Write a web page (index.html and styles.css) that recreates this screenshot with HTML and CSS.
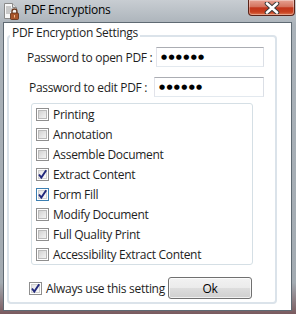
FILE: index.html
```html
<!DOCTYPE html>
<html lang="en">
<head>
  <meta charset="UTF-8">
  <title>PDF Encryptions</title>
  <link rel="stylesheet" href="styles.css">
</head>
<body>
  <div class="window">
    <div class="titlebar">
      <svg class="app-icon" width="16" height="18" viewBox="0 0 16 18">
        <path d="M1.5 1.5h8l4 4v11h-12z" fill="#f7f7f7" stroke="#8a8a8a"/>
        <path d="M9.5 1.5v4h4" fill="#dedede" stroke="#8a8a8a"/>
        <path d="M3 5h5M3 7h7M3 9h6M3 11h4" stroke="#9c9c9c"/>
        <path d="M9 11v-1.5a2.5 2.5 0 0 1 5 0v1.5" fill="none" stroke="#6b3b22" stroke-width="1.3"/>
        <rect x="7.5" y="11" width="8" height="6.5" rx="1" fill="#a8552b" stroke="#5c2c14" stroke-width="0.8"/>
        <rect x="11" y="13" width="1" height="2.5" fill="#f0c090"/>
      </svg>
      <span class="title">PDF Encryptions</span>
      <div class="close">
        <svg width="16" height="12" viewBox="0 0 16 12">
          <path d="M3 1.5l10 9M13 1.5l-10 9" stroke="#3a3a3a" stroke-width="4.6" stroke-linecap="round"/>
          <path d="M3 1.5l10 9M13 1.5l-10 9" stroke="#ffffff" stroke-width="2.6" stroke-linecap="round"/>
        </svg>
      </div>
    </div>

    <div class="client">
      <div class="group">
        <span class="group-title">PDF Encryption Settings</span>

        <div class="pw-row pw-open">
          <span class="pw-label">Password to open PDF :</span>
          <div class="field"><span class="dots">●●●●●●</span></div>
        </div>
        <div class="pw-row pw-edit">
          <span class="pw-label">Password to edit PDF :</span>
          <div class="field"><span class="dots">●●●●●●</span></div>
        </div>

        <div class="perm-list">
          <div class="perm"><span class="cb"></span>Printing</div>
          <div class="perm"><span class="cb"></span>Annotation</div>
          <div class="perm"><span class="cb"></span>Assemble Document</div>
          <div class="perm"><span class="cb checked"></span>Extract Content</div>
          <div class="perm"><span class="cb checked hot"></span>Form Fill</div>
          <div class="perm"><span class="cb"></span>Modify Document</div>
          <div class="perm"><span class="cb"></span>Full Quality Print</div>
          <div class="perm"><span class="cb"></span>Accessibility Extract Content</div>
        </div>

        <div class="footer">
          <div class="perm"><span class="cb checked"></span>Always use this setting</div>
          <button class="ok">Ok</button>
        </div>
      </div>
    </div>
  </div>
</body>
</html>
```

FILE: styles.css
```css
body {
  margin: 0;
  font-family: 'Open Sans', 'Noto Sans', sans-serif;
  font-size: 12px;
  letter-spacing: -0.3px;
  color: #1e1e1e;
  white-space: nowrap;
}
.window {
  width: 296px;
  height: 314px;
  display: flex;
  flex-direction: column;
  background: linear-gradient(#c8cdd2, #aab2b9 8%, #a3abb2 90%, #7a5a5e);
  overflow: hidden;
}

/* caption */
.titlebar {
  height: 22px;
  display: flex;
  align-items: flex-start;
  flex-shrink: 0;
}
.app-icon { margin: 2px 0 0 3px; }
.title {
  margin: 2px 0 0 5px;
  line-height: 16px;
  color: #000;
}
.close {
  margin-left: auto;
  margin-right: 1px;
  width: 47px;
  height: 16px;
  box-sizing: border-box;
  border: 1px solid #5a2318;
  border-top: none;
  border-radius: 0 0 4px 4px;
  background: linear-gradient(#e6a193, #d4735e 45%, #c2351c 52%, #c8401f 80%, #de7a55);
  box-shadow: inset 0 0 0 1px rgba(255, 255, 255, 0.35);
  display: flex;
  justify-content: center;
  align-items: center;
}

/* client area */
.client {
  flex: 1;
  margin: 0 4px 3px 3px;
  border: 1px solid #5f6a73;
  background: #ffffff;
  padding: 12px 0 0 3px;
}
.group {
  position: relative;
  width: 270px;
  box-sizing: border-box;
  border: 2px solid #dbe3ea;
  border-radius: 4px;
  padding-bottom: 3px;
}
.group-title {
  position: absolute;
  left: 1px;
  top: -12px;
  padding: 0 2px;
  line-height: 16px;
  background: #ffffff;
}

.pw-row {
  display: flex;
  align-items: center;
  height: 20px;
}
.pw-open { margin-top: 10px; padding-left: 18px; }
.pw-open .pw-label { width: 129px; }
.pw-open .field { width: 108px; }
.pw-edit { margin-top: 10px; padding-left: 20px; }
.pw-edit .pw-label { width: 125px; }
.pw-edit .field { width: 110px; }
.field {
  height: 20px;
  box-sizing: border-box;
  border: 1px solid;
  border-color: #abadb3 #dbdfe6 #e3e9ef #e2e3ea;
  padding-left: 4px;
  display: flex;
  align-items: center;
}
.dots {
  font-family: 'DejaVu Sans', sans-serif;
  font-size: 7px;
  letter-spacing: 1.3px;
  color: #000;
}

.perm-list {
  margin: 6px 0 0 22px;
  width: 222px;
  box-sizing: border-box;
  border: 1px solid #d5dfe5;
  border-radius: 3px;
  padding-left: 4px;
}
.perm {
  height: 20px;
  display: flex;
  align-items: center;
  gap: 4px;
}

/* checkbox */
.cb {
  position: relative;
  width: 13px;
  height: 13px;
  box-sizing: border-box;
  border: 1px solid #8f8f8f;
  background: #ffffff;
  flex-shrink: 0;
}
.cb::before {
  content: "";
  position: absolute;
  left: 1px; top: 1px;
  width: 9px; height: 9px;
  box-sizing: border-box;
  border: 1px solid #bababa;
  background: linear-gradient(135deg, #d2d2d2, #f3f3f3);
}
.cb.hot { border-color: #3c7fb1; }
.cb.checked::before { background: linear-gradient(135deg, #e4e4e4, #fbfbfb); border-color: #cfcfcf; }
.cb.checked::after {
  content: "";
  position: absolute;
  left: 0; top: 0;
  width: 11px; height: 11px;
  background: url("data:image/svg+xml,%3Csvg xmlns='http://www.w3.org/2000/svg' width='11' height='11'%3E%3Cpath d='M2 5.5l2.3 3L9.2 1.2' fill='none' stroke='%2321287c' stroke-width='1.9'/%3E%3C/svg%3E");
}

.footer {
  margin-top: 12px;
  display: flex;
  align-items: center;
  padding: 0 23px 0 20px;
}
.ok {
  margin-left: auto;
  width: 84px;
  height: 22px;
  border: 1px solid #707070;
  border-radius: 3px;
  background: linear-gradient(#f2f2f2, #ebebeb 49%, #dddddd 50%, #cfcfcf);
  box-shadow: inset 0 0 0 1px rgba(255, 255, 255, 0.7);
  font-family: inherit;
  font-size: 12px;
  letter-spacing: inherit;
  color: #000;
  padding: 0;
}
```
